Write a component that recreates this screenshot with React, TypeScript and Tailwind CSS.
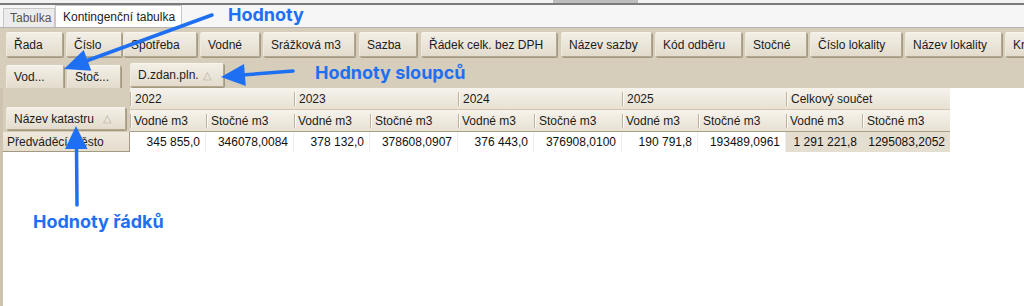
import React from "react";

const toolbarButtons = [
  { label: "Řada", cls: "ml-[6px] w-[57px]" },
  { label: "Číslo", cls: "ml-[3px] w-[56px]" },
  { label: "Spotřeba", cls: "ml-[1px] w-[74px]" },
  { label: "Vodné", cls: "ml-[3px] w-[60px]" },
  { label: "Srážková m3", cls: "ml-[3px] w-[92px]" },
  { label: "Sazba", cls: "ml-[4px] w-[58px]" },
  { label: "Řádek celk. bez DPH", cls: "ml-[4px] w-[136px]" },
  { label: "Název sazby", cls: "ml-[4px] w-[91px]" },
  { label: "Kód odběru", cls: "ml-[3px] w-[87px]" },
  { label: "Stočné", cls: "ml-[3px] w-[62px]" },
  { label: "Číslo lokality", cls: "ml-[3px] w-[92px]" },
  { label: "Název lokality", cls: "ml-[3px] w-[97px]" },
  { label: "Kraj", cls: "ml-[3px] w-[60px]" },
];

const years = [
  { label: "2022", vodne: "345 855,0", stocne: "346078,0084", total: false },
  { label: "2023", vodne: "378 132,0", stocne: "378608,0907", total: false },
  { label: "2024", vodne: "376 443,0", stocne: "376908,0100", total: false },
  { label: "2025", vodne: "190 791,8", stocne: "193489,0961", total: false },
  { label: "Celkový součet", vodne: "1 291 221,8", stocne: "1295083,2052", total: true },
];

const btn =
  "h-full flex items-center shrink-0 overflow-hidden whitespace-nowrap pl-[7px] rounded-[2px] border border-[#b3a890] border-t-[#f7f4ee] border-l-[#efe9de] bg-linear-to-b from-[#f3efe6] to-[#e3dccd] shadow-[1px_1px_0_#a39880] text-[#1c1c1c]";

function Sep() {
  return <span className="w-[2px] h-[14px] shrink-0 border-l border-l-[#bdb39e] border-r border-r-[#fbf9f4]" />;
}

function Triangle() {
  return <span className="ml-auto mr-[14px] text-[11px] text-[#b8b0a0]">△</span>;
}

export default function App() {
  return (
    <div className="relative w-[1024px] h-[306px] overflow-hidden bg-white text-[12px] [font-family:'Liberation_Sans',Arial,sans-serif]">
      {/* window top */}
      <div className="h-[3px] bg-[#f2f2f2] flex">
        <div className="ml-[553px] w-[85px] bg-[#bdbdbd]" />
      </div>
      <div className="h-[2px] bg-[#7b7b7b]" />

      {/* tabs */}
      <div className="h-[22px] bg-[#f6f6f6] flex items-end">
        <div className="ml-[3px] w-[52px] h-[19px] border border-b-0 border-[#c8c8c8] bg-[#ececec] text-[#555] flex items-center pl-[6px]">
          Tabulka
        </div>
        <div className="w-[127px] h-[22px] border border-b-0 border-[#c8c8c8] bg-white text-[#222] flex items-center pl-[7px]">
          Kontingenční tabulka
        </div>
      </div>
      <div className="h-px bg-[#b4b4b4]" />

      {/* field list */}
      <div className="h-[31px] bg-[#d6cdbb] pt-[4px] pb-[2px] flex">
        {toolbarButtons.map((b) => (
          <div key={b.label} className={`${btn} ${b.cls}`}>
            {b.label}
          </div>
        ))}
      </div>

      {/* data + column fields */}
      <div className="h-[29px] bg-[#d6cdbb] pt-[4px] pb-[1px] flex">
        <div className={`${btn} ml-[6px] w-[58px] h-[22px] mt-[2px]`}>Vod...</div>
        <div className={`${btn} ml-[3px] w-[54px] h-[22px] mt-[2px]`}>Stoč...</div>
        <div className={`${btn} ml-[9px] w-[94px]`}>
          D.zdan.pln.
          <span className="ml-auto mr-[12px] text-[11px] text-[#b8b0a0]">△</span>
        </div>
      </div>

      {/* pivot */}
      <div className="flex h-[218px]">
        <div className="w-[3px] bg-[#cdc3af]" />
        <div className="flex flex-col">
          <div className="flex">
            <div className="w-[127px] flex flex-col">
              <div className="h-[44px] bg-[#d6cdbb] pt-[19px] pb-[2px]">
                <div className={`${btn} ml-[3px] w-[120px]`}>
                  Název katastru
                  <Triangle />
                </div>
              </div>
              <div className="h-[20px] flex items-center pl-[4px] bg-linear-to-b from-[#efe9dd] to-[#e5ddcd] border-b border-r border-[#a39881] text-[#1c1c1c]">
                Předváděcí město
              </div>
            </div>

            <div className="flex">
              {years.map((y) => (
                <div key={y.label} className="w-[164px] flex flex-col">
                  <div className="h-[22px] flex items-center bg-linear-to-b from-[#f6f3ec] to-[#e8e1d3] border-b border-[#cfc6b3] text-[#1c1c1c]">
                    <Sep />
                    <span className="pl-[3px]">{y.label}</span>
                  </div>
                  <div className="h-[22px] flex bg-linear-to-b from-[#f6f3ec] to-[#e8e1d3] border-b border-[#a99f89] text-[#1c1c1c]">
                    <div className="w-[76px] flex items-center">
                      <Sep />
                      <span className="pl-[2px]">Vodné m3</span>
                    </div>
                    <div className="w-[88px] flex items-center">
                      <Sep />
                      <span className="pl-[3px]">Stočné m3</span>
                    </div>
                  </div>
                  <div className={`h-[20px] flex text-[#111] ${y.total ? "bg-[#e4ded1]" : "bg-white"}`}>
                    <div className={`w-[76px] flex items-center justify-end pr-[5px] ${y.total ? "" : "border-r border-[#ececec]"}`}>
                      {y.vodne}
                    </div>
                    <div className={`w-[88px] flex items-center justify-end pr-[5px] ${y.total ? "" : "border-r border-[#ececec]"}`}>
                      {y.stocne}
                    </div>
                  </div>
                </div>
              ))}
            </div>
          </div>
        </div>
      </div>

      {/* annotations */}
      <svg className="absolute inset-0 pointer-events-none" width="1024" height="306" viewBox="0 0 1024 306">
        <g stroke="#1f6ff2" strokeWidth="3.5" strokeLinecap="round" fill="none">
          <line x1="212" y1="15" x2="86" y2="61" />
          <line x1="293" y1="71" x2="242" y2="75" />
          <line x1="77" y1="205" x2="76.5" y2="145" />
        </g>
        <g fill="#1f6ff2">
          <polygon points="64,69 91.3,70.7 83.7,50.1" />
          <polygon points="221,77 245.8,86 244,64" />
          <polygon points="76,126 65,149 87.5,149" />
        </g>
      </svg>
      <div className="absolute left-[228px] top-[4px] text-[18px] leading-[22px] font-bold text-[#1f6ff2] [font-family:Inter,sans-serif]">
        Hodnoty
      </div>
      <div className="absolute left-[315px] top-[62px] text-[18px] leading-[22px] font-bold text-[#1f6ff2] [font-family:Inter,sans-serif]">
        Hodnoty sloupců
      </div>
      <div className="absolute left-[33px] top-[211px] text-[18px] leading-[22px] font-bold text-[#1f6ff2] [font-family:Inter,sans-serif]">
        Hodnoty řádků
      </div>
    </div>
  );
}
